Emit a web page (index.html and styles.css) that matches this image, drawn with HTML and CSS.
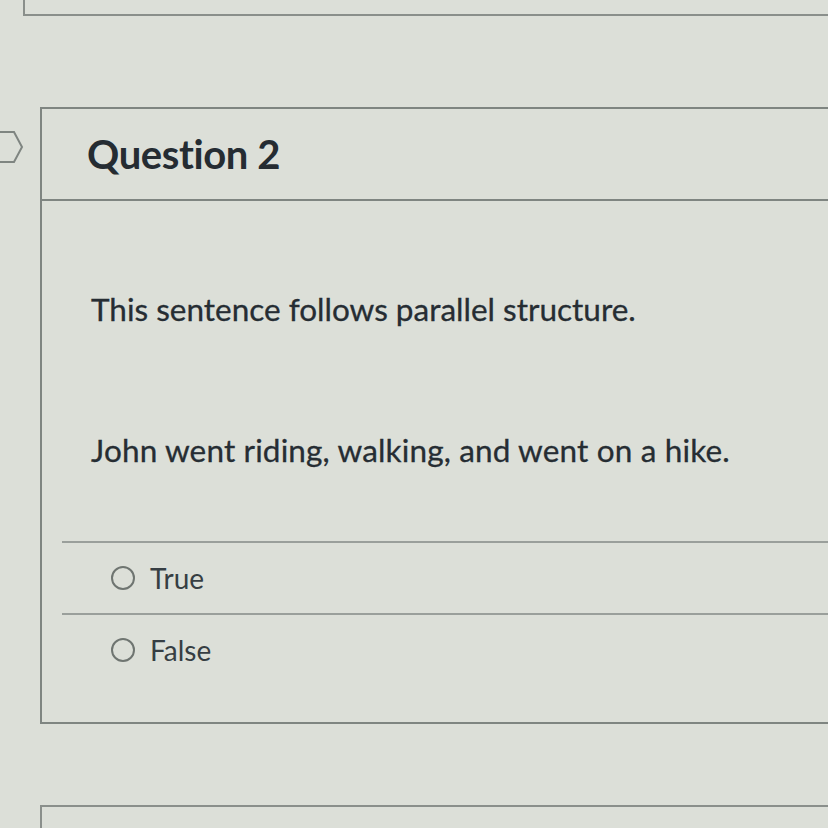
FILE: index.html
```html
<!DOCTYPE html>
<html>
<head>
<meta charset="utf-8">
<link rel="stylesheet" href="styles.css">
</head>
<body>
<div class="prev-card"></div>
<div class="question-row">
  <div class="marker">
    <svg width="40" height="40" viewBox="0 0 40 40"><polyline points="-2,8 14,8 22,23 14,38 -2,38" fill="none" stroke="#7f8581" stroke-width="2"/></svg>
  </div>
  <div class="card">
    <div class="card-header"><h2 class="q-title">Question 2</h2></div>
    <div class="card-body">
      <p class="q-text first">This sentence follows parallel structure.</p>
      <p class="q-text second">John went riding, walking, and went on a hike.</p>
      <div class="answers">
        <label class="answer"><span class="radio"></span><span class="answer-text">True</span></label>
        <label class="answer"><span class="radio"></span><span class="answer-text">False</span></label>
      </div>
    </div>
  </div>
</div>
<div class="next-card"></div>
</body>
</html>
```
FILE: styles.css
```css
html, body {
  margin: 0;
  padding: 0;
  background: #dcdfd8;
  font-family: Lato, "Open Sans", sans-serif;
  color: #262d33;
  overflow: hidden;
  height: 828px;
}
.prev-card {
  margin-left: 23px;
  height: 14px;
  border-left: 2px solid #8a8f8b;
  border-bottom: 2px solid #8a8f8b;
}
.question-row {
  display: flex;
  margin-top: 91px;
}
.marker {
  width: 40px;
  flex: none;
  padding-top: 17px;
}
.marker svg { display: block; }
.card {
  flex: 1;
  border-left: 2px solid #7f8581;
  border-top: 2px solid #7f8581;
  border-bottom: 2px solid #7f8581;
  height: 617px;
  box-sizing: border-box;
}
.card-header {
  height: 90px;
  border-bottom: 2px solid #7f8581;
  display: flex;
  align-items: center;
  padding-left: 45px;
}
.q-title {
  margin: 0;
  font-size: 40px;
  font-weight: 700;
  letter-spacing: -0.4px;
  color: #252c32;
}
.card-body {
  padding-top: 89px;
}
.q-text {
  margin: 0;
  padding-left: 49px;
  font-size: 31.5px;
  line-height: 38px;
  -webkit-text-stroke: 0.3px #262d33;
}
.q-text.second {
  margin-top: 103px;
  letter-spacing: 0.15px;
}
.answers {
  margin-top: 72px;
  margin-left: 20px;
}
.answer {
  display: flex;
  align-items: center;
  height: 70px;
  border-top: 2px solid #9a9f9b;
  padding-left: 49px;
  gap: 15px;
}
.radio {
  width: 24px;
  height: 24px;
  border: 2px solid #6f7571;
  border-radius: 50%;
  box-sizing: border-box;
}
.answer-text {
  font-size: 28px;
  color: #363e43;
}
.next-card {
  margin-top: 81px;
  margin-left: 40px;
  height: 40px;
  border-left: 2px solid #8a8f8b;
  border-top: 2px solid #8a8f8b;
}
```
